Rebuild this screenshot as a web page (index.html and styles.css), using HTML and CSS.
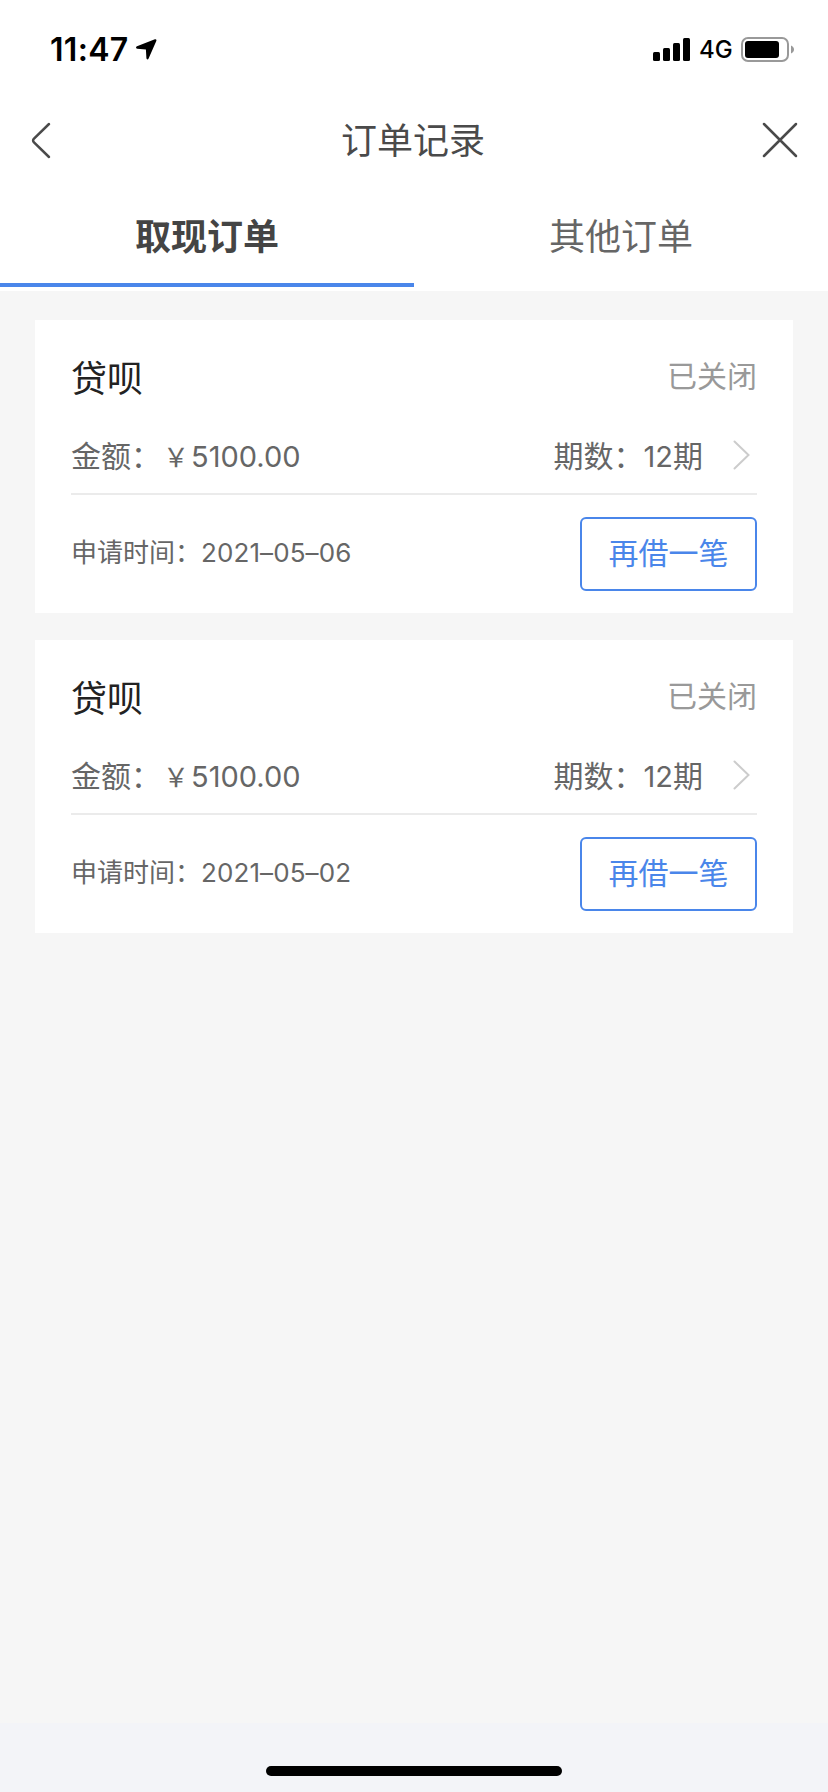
FILE: index.html
```html
<!DOCTYPE html>
<html lang="zh-CN">
<head>
<meta charset="utf-8">
<meta name="viewport" content="width=device-width">
<title>订单记录</title>
<link rel="stylesheet" href="styles.css">
</head>
<body>
<div class="screen">
  <header class="status-bar">
    <div class="status-left">
      <span class="clock">11:47</span>
      <svg class="location" width="21" height="21" viewBox="0 0 21 21"><path d="M18.900.300 1 7.200C-.300 7.800-.300 9.500 1.200 9.700L9.900 10.500 10.400 19C10.500 20.700 12 20.900 12.600 19.500L20.300 1.900C20.800.600 20 0 18.900.300Z"/></svg>
    </div>
    <div class="status-right">
      <svg class="signal" width="38" height="23" viewBox="0 0 38 23"><rect x="0" y="14" width="7" height="9" rx="1.500"/><rect x="10" y="10" width="7" height="13" rx="1.500"/><rect x="20" y="5" width="7" height="18" rx="1.500"/><rect x="30" y="0" width="7" height="23" rx="1.500"/></svg>
      <span class="network">4G</span>
      <svg class="battery" width="54" height="25" viewBox="0 0 54 25"><rect x="1" y="1" width="46" height="23" rx="6" fill="none" stroke="#999" stroke-width="2"/><rect x="4" y="4" width="34" height="17" rx="3"/><path d="M50 8.500C54 10 54 15 50 16.500Z" fill="#999"/></svg>
    </div>
  </header>
  <nav class="nav-bar">
    <svg class="back" width="20" height="37" viewBox="0 0 20 37"><path d="M18 2 3 16.700Q1.200 18.500 3 20.300L18 35"/></svg>
    <h1 class="nav-title">订单记录</h1>
    <svg class="close" width="36" height="36" viewBox="0 0 36 36"><path d="M2 2 34 34M34 2 2 34"/></svg>
  </nav>
  <div class="tabs">
    <div class="tab tab-active">取现订单</div>
    <div class="tab">其他订单</div>
  </div>
  <main class="orders">
    <section class="card">
      <div class="card-head"><h2 class="lender">贷呗</h2><span class="state">已关闭</span></div>
      <div class="card-info">
        <span class="amount">金额：<span class="yen">￥</span><span class="latin">5100.00</span></span>
        <span class="term">期数：<span class="latin">12</span>期</span>
        <svg class="chevron" width="18" height="30" viewBox="0 0 18 30"><path d="M1.500 1.500 15.500 15 1.500 28.500"/></svg>
      </div>
      <div class="card-foot">
        <span class="applied">申请时间：<span class="date">2021–05–06</span></span>
        <button class="again">再借一笔</button>
      </div>
    </section>
    <section class="card">
      <div class="card-head"><h2 class="lender">贷呗</h2><span class="state">已关闭</span></div>
      <div class="card-info">
        <span class="amount">金额：<span class="yen">￥</span><span class="latin">5100.00</span></span>
        <span class="term">期数：<span class="latin">12</span>期</span>
        <svg class="chevron" width="18" height="30" viewBox="0 0 18 30"><path d="M1.500 1.500 15.500 15 1.500 28.500"/></svg>
      </div>
      <div class="card-foot">
        <span class="applied">申请时间：<span class="date">2021–05–02</span></span>
        <button class="again">再借一笔</button>
      </div>
    </section>
  </main>
  <footer class="home-area"><div class="home-indicator"></div></footer>
</div>
</body>
</html>
```
FILE: styles.css
```css
* { box-sizing: border-box; }
body {
  margin: 0;
  font-family: "Noto Sans CJK SC", sans-serif;
  color: #666;
  background: #f6f6f6;
}
h1, h2 { margin: 0; font-weight: 400; }
svg { display: block; flex: none; }
.screen {
  display: flex;
  flex-direction: column;
  width: 828px;
  height: 1792px;
  overflow: hidden;
}
.status-bar {
  display: flex;
  justify-content: space-between;
  height: 96px;
  padding: 3px 33px 0 50px;
  background: #fff;
  color: #000;
}
.status-left, .status-right { display: flex; align-items: center; }
.clock {
  width: 86px;
  font: 600 32px/40px Inter, sans-serif;
  letter-spacing: 0.3px;
}
.network {
  width: 42px;
  margin-left: 8px;
  font: 500 24px/30px Inter, sans-serif;
}
.nav-bar {
  display: flex;
  align-items: center;
  justify-content: space-between;
  height: 88px;
  padding: 0 30px 0 31px;
  background: #fff;
}
.back, .close {
  fill: none;
  stroke: #4a4a4a;
  stroke-width: 2.500px;
  stroke-linecap: round;
}
.nav-title {
  padding: 0 0 5px 13px;
  font-size: 36px;
  line-height: 48px;
  color: #4a4a4a;
}
.tabs {
  display: flex;
  height: 107px;
  padding-bottom: 4px;
  background: #fff;
}
.tab {
  flex: 1;
  padding-top: 24px;
  border-bottom: 4px solid transparent;
  font-size: 36px;
  line-height: 52px;
  text-align: center;
}
.tab-active { border-color: #4a86ea; color: #444; font-weight: 700; }
.orders {
  display: flex;
  flex: 1;
  flex-direction: column;
  gap: 27px;
  padding: 29px 35px 0;
}
.card { height: 293px; padding: 0 36px; background: #fff; }
.card-head {
  display: flex;
  align-items: center;
  justify-content: space-between;
  height: 116px;
  padding-bottom: 4px;
}
.lender { font-size: 36px; line-height: 48px; color: #222; }
.state { padding-bottom: 4px; font-size: 30px; line-height: 40px; color: #999; }
.card-info {
  display: flex;
  align-items: center;
  height: 59px;
  padding-bottom: 18px;
  border-bottom: 2px solid #ebebeb;
  font-size: 30px;
  line-height: 40px;
}
.amount { flex: 1; }
.yen {
  display: inline-block;
  width: 30px;
  font-size: 26px;
  text-align: center;
}
.latin { font-family: Inter, sans-serif; font-size: 29px; }
.chevron {
  margin: 0 6px 2px 30px;
  fill: none;
  stroke: #ccc;
  stroke-width: 2px;
  stroke-linecap: round;
}
.card-foot {
  display: flex;
  align-items: center;
  justify-content: space-between;
  height: 118px;
}
.applied { padding-bottom: 4px; font-size: 26px; line-height: 36px; }
.date { font-family: Inter, sans-serif; font-size: 26px; letter-spacing: 0.1px; }
.again {
  width: 177px;
  height: 74px;
  padding: 0 0 7px;
  border: 2px solid #4a86ea;
  border-radius: 6px;
  background: #fff;
  color: #4a86ea;
  font: 400 30px/40px "Noto Sans CJK SC", sans-serif;
}
.home-area {
  display: flex;
  justify-content: center;
  height: 69px;
  padding-top: 43px;
  background: #f3f4f8;
}
.home-indicator {
  width: 296px;
  height: 10px;
  border-radius: 5px;
  background: #000;
}
```
